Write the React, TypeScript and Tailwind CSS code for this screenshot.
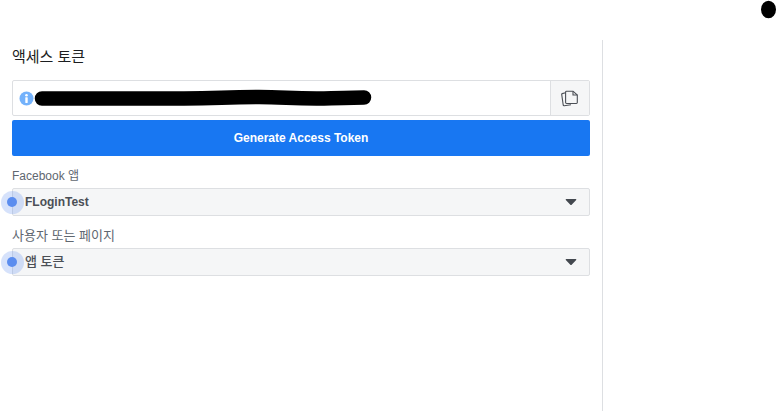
import React from "react";

const FONT = "font-['Liberation_Sans','Noto_Sans_CJK_KR',sans-serif]";

function Caret() {
  return (
    <svg width="12" height="7" viewBox="0 0 12 7" className="shrink-0">
      <path d="M0.8 1 Q0.3 0.1 1.3 0.1 H10.7 Q11.7 0.1 11.2 1 L6.9 5.6 Q6 6.6 5.1 5.6 Z" fill="#444950" />
    </svg>
  );
}

function Pulse() {
  return (
    <span className="absolute left-[-12.5px] top-[1.5px] flex h-[23px] w-[23px] items-center justify-center rounded-full bg-[#5b8def]/25">
      <span className="h-[10px] w-[10px] rounded-full bg-[#5b8def]" />
    </span>
  );
}

function Select({ label, value, labelClass, valueClass, className }: { label: string; value: string; labelClass: string; valueClass: string; className: string }) {
  return (
    <div className={className}>
      <div className={`h-[16px] leading-[16px] text-[#606770] ${labelClass}`}>{label}</div>
      <div className="relative mt-[4px] flex h-[28px] items-center justify-between rounded-[2px] border border-[#dddfe2] bg-[#f5f6f7] pl-[12px] pr-[12px]">
        <Pulse />
        <span className={`text-[#4b4f56] ${valueClass}`}>{value}</span>
        <Caret />
      </div>
    </div>
  );
}

export default function App() {
  return (
    <div className={`relative h-[411px] w-[776px] overflow-hidden bg-white pt-[40px] ${FONT}`}>
      <svg className="absolute left-[760px] top-0" width="16" height="20" viewBox="0 0 16 20">
        <ellipse cx="8.5" cy="9.5" rx="7.5" ry="8.7" fill="#000" />
      </svg>
      <div className="h-[371px] w-[603px] border-r border-[#dddfe2] px-[12px]">
        <h2 className="pt-[8px] text-[15px] leading-[18px] text-[#1c1e21]">액세스 토큰</h2>
        <div className="mt-[14px] flex h-[36px] w-[578px] rounded-[2px] border border-[#dddfe2]">
          <div className="relative flex flex-1 items-center pl-[6px]">
            <svg width="15" height="15" viewBox="0 0 15 15" className="ml-[-0.5px] shrink-0">
              <circle cx="7.5" cy="7.5" r="7" fill="#74b2fb" />
              <circle cx="7.5" cy="4.2" r="1.3" fill="#fff" />
              <rect x="6.3" y="6.3" width="2.4" height="5.6" rx="0.4" fill="#fff" />
            </svg>
            <svg width="340" height="18" viewBox="0 0 340 18" className="shrink-0">
              <path d="M8 9.5 H150 C185 9.5 190 8 225 8 C250 8 260 10 290 9.5 C305 9 320 8.5 330 8.5" stroke="#000" strokeWidth="14.5" strokeLinecap="round" fill="none" />
            </svg>
          </div>
          <div className="flex w-[39px] items-center justify-center border-l border-[#dddfe2] bg-[#f5f6f7]">
            <svg width="18" height="17" viewBox="0 0 18 17" fill="none" stroke="#4b4f56" strokeWidth="1.1">
              <path d="M4.5 2.8 L1.2 3.6 Q0.6 3.8 0.7 4.4 L2.2 15 Q2.4 15.8 3.2 15.7 L10 14.8" />
              <path d="M5.5 1.2 H12 L16.3 5 V12.6 Q16.3 13.5 15.4 13.5 H5.5 Q4.6 13.5 4.6 12.6 V2.1 Q4.6 1.2 5.5 1.2 Z" fill="#f5f6f7" />
              <path d="M12 1.2 V5 H16.3" />
            </svg>
          </div>
        </div>
        <button className="mt-[4px] flex h-[36px] w-[578px] items-center justify-center rounded-[2px] bg-[#1877f2] text-[12px] font-bold text-white">
          Generate Access Token
        </button>
        <Select label="Facebook 앱" labelClass="text-[12px]" value="FLoginTest" valueClass="text-[12px] font-bold" className="mt-[12px]" />
        <Select label="사용자 또는 페이지" labelClass="text-[13px]" value="앱 토큰" valueClass="text-[13px] font-medium" className="mt-[12px]" />
      </div>
    </div>
  );
}
